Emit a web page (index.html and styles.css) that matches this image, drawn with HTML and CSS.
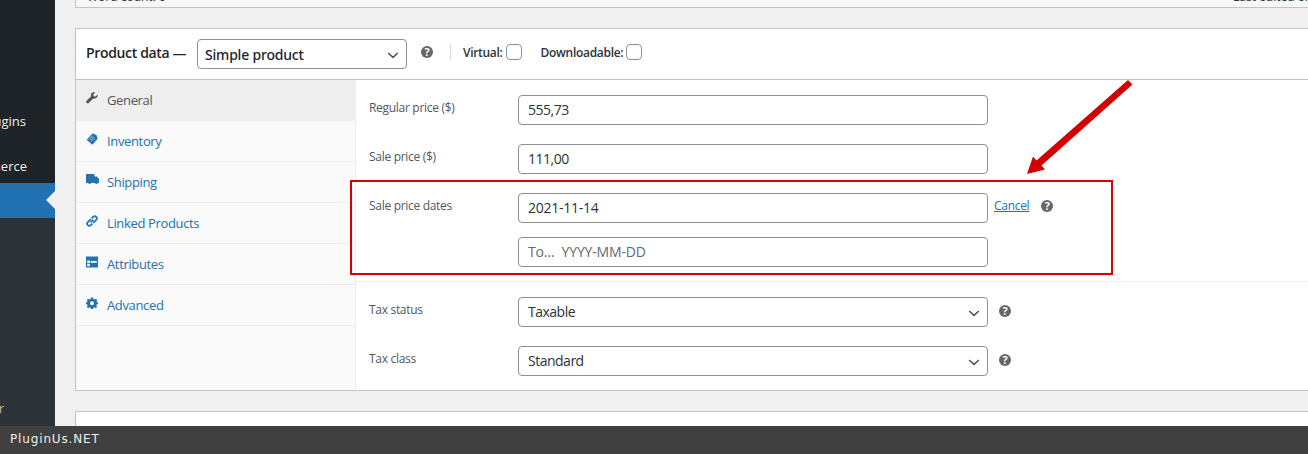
FILE: index.html
```html
<!DOCTYPE html>
<html lang="en">
<head>
<meta charset="utf-8">
<title>Product data</title>
<link rel="stylesheet" href="styles.css">
</head>
<body>
<div class="page">
  <aside class="sidebar">
    <div class="menu-dark">
      <div class="menu-item item-plugins">Plugins</div>
      <div class="menu-item item-woo">WooCommerce</div>
    </div>
    <div class="menu-active"><span class="menu-arrow"></span></div>
    <div class="menu-lower">
      <div class="menu-item item-last">Filter</div>
    </div>
  </aside>
  <main class="main">
    <div class="top-card">
      <span>Word count: 0</span>
      <span class="last-edited">Last edited on</span>
    </div>
    <section class="card product-card">
      <header class="card-head">
        <span class="head-title">Product data —</span>
        <select class="field head-select"><option>Simple product</option></select>
        <span class="help head-help">?</span>
        <span class="head-divider"></span>
        <label class="check-label">Virtual:<input class="check" type="checkbox"></label>
        <label class="check-label check-second">Downloadable:<input class="check" type="checkbox"></label>
      </header>
      <div class="card-body">
        <ul class="tabs">
          <li class="tab tab-active">
            <svg class="tab-icon" viewBox="0 0 12 12"><path d="M11.6 2.6 9.5 4.6 7.7 4.2 7.3 2.4 9.3.4C7.9-.1 6.5.2 5.700 1.100 4.900 2 4.700 3.200 5.100 4.300L.6 8.800C0 9.400 0 10.300.6 10.900 1.200 11.500 2.100 11.500 2.700 10.900L7.200 6.400C8.400 6.900 9.800 6.600 10.800 5.600 11.600 4.800 11.900 3.700 11.600 2.600Z"/></svg>
            General
          </li>
          <li class="tab">
            <svg class="tab-icon" viewBox="0 0 12 13"><path d="M6.800.2 11 2.400 12 6.600 6.400 12.800.2 7.200Z"/><path class="cut" d="M3.600 5 7.800 9.200M5.200 3.400 9.400 7.600M2.400 7.600 6.800 3M4.200 9.200 8.600 4.600"/></svg>
            Inventory
          </li>
          <li class="tab">
            <svg class="tab-icon icon-wide" viewBox="0 0 13 11"><path d="M0 0H8.400V2.400H10.800L13 5V9H11.700A1.400 1.400 0 0 1 9 9H5A1.400 1.400 0 0 1 2.300 9H0Z"/></svg>
            Shipping
          </li>
          <li class="tab">
            <svg class="tab-icon" viewBox="0 0 12 12"><path class="line" d="M4.600 7.400 7.400 4.600M4.800 4.200 1.800 7.200A2.100 2.100 0 0 0 4.800 10.200L6.400 8.600M7.200 7.800 10.200 4.800A2.100 2.100 0 0 0 7.200 1.800L5.600 3.400"/></svg>
            Linked Products
          </li>
          <li class="tab">
            <svg class="tab-icon" viewBox="0 0 12 11"><path fill-rule="evenodd" d="M0 0H12V11H0ZM1.200 4V6.800H3.800V4ZM1.200 7.400V9.800H3.800V7.400ZM4.600 4.600V6.200H10.800V4.600Z"/></svg>
            Attributes
          </li>
          <li class="tab">
            <svg class="tab-icon" viewBox="0 0 12 12"><path fill-rule="evenodd" d="M4.900.4H7.100L7.400 2 8.700 2.600 10 1.700 11.300 3.200 10.400 4.400 10.900 5.100 12 5.400V7.100L10.700 7.500 10.300 8.500 11.100 9.800 9.700 11.200 8.500 10.300 7.400 10.800 7.100 12H4.900L4.600 10.800 3.500 10.300 2.200 11.200.8 9.800 1.700 8.500 1.200 7.500 0 7.100V5.400L1.200 5.100 1.600 4.300.8 3.100 2.200 1.700 3.400 2.600 4.600 2ZM6 4.200A2 2 0 1 0 6 8.200 2 2 0 0 0 6 4.200Z"/></svg>
            Advanced
          </li>
        </ul>
        <div class="panel">
          <div class="group">
            <div class="row row-gap">
              <label class="row-label">Regular price ($)</label>
              <input class="field" type="text" value="555,73">
            </div>
            <div class="row row-gap">
              <label class="row-label">Sale price ($)</label>
              <input class="field" type="text" value="111,00">
            </div>
            <div class="row row-dates">
              <label class="row-label">Sale price dates</label>
              <input class="field field-date" type="text" value="2021-11-14">
              <a class="cancel" href="#">Cancel</a>
              <span class="help date-help">?</span>
            </div>
            <div class="row">
              <span class="row-label"></span>
              <input class="field" type="text" placeholder="To…  YYYY-MM-DD">
            </div>
          </div>
          <div class="group group-tax">
            <div class="row row-gap">
              <label class="row-label">Tax status</label>
              <select class="field"><option>Taxable</option></select>
              <span class="help tax-help">?</span>
            </div>
            <div class="row">
              <label class="row-label">Tax class</label>
              <select class="field"><option>Standard</option></select>
              <span class="help tax-help">?</span>
            </div>
          </div>
        </div>
      </div>
    </section>
    <section class="card next-card"></section>
  </main>
  <footer class="bar">PluginUs.NET</footer>
  <div class="red-box"></div>
  <svg class="red-arrow" viewBox="0 0 110 100"><path d="M102 0 106.500 4.500 15.500 85.500 19 89.500 1 94 7 76.500 10.500 80.500Z"/></svg>
</div>
</body>
</html>
```
FILE: styles.css
```css
* { box-sizing: border-box; }
html, body { margin: 0; padding: 0; height: 100%; overflow: hidden; }
body { font-family: "Open Sans", "Noto Sans", sans-serif; color: #2c3338; }

.page {
  position: relative;
  width: 1308px;
  height: 454px;
  display: grid;
  grid-template-columns: 55px 1fr;
  grid-template-rows: 426px 28px;
  overflow: hidden;
  background: #f0f0f1;
}

/* sidebar */
.sidebar { display: flex; flex-direction: column; overflow: hidden; }
.menu-dark { height: 183px; background: #1d2327; padding-top: 112px; }
.menu-active { position: relative; height: 35px; background: #2271b1; }
.menu-arrow {
  position: absolute;
  right: 0;
  top: 8px;
  border: 9px solid transparent;
  border-right-color: #f0f0f1;
  border-left-width: 0;
}
.menu-lower { flex: 1; background: #2c3338; padding-top: 181px; }
.menu-item {
  display: flex;
  justify-content: flex-end;
  height: 18px;
  line-height: 18px;
  font-size: 13px;
  color: #f0f0f1;
  white-space: nowrap;
}
.item-plugins { padding-right: 29px; }
.item-woo { margin-top: 27px; padding-right: 28px; }
.item-last { padding-right: 51px; color: #c9b896; }

/* main */
.main { padding-left: 20px; overflow: hidden; min-width: 0; }
.top-card {
  position: relative;
  height: 8px;
  margin-bottom: 20px;
  margin-right: -20px;
  background: #f6f7f7;
  border: 1px solid #c3c4c7;
  border-top: 0;
  font-size: 12px;
  line-height: 16px;
  color: #2c3338;
  overflow: hidden;
}
.top-card span { display: block; position: absolute; left: 11px; top: -11px; }
.top-card .last-edited { left: 1157px; white-space: nowrap; }

.card {
  background: #fff;
  border: 1px solid #c3c4c7;
  margin-right: -20px;
}
.product-card { height: 363px; margin-bottom: 20px; }
.next-card { height: 40px; }

.card-head {
  height: 51px;
  display: flex;
  align-items: center;
  padding-left: 10px;
  border-bottom: 1px solid #c3c4c7;
  padding-bottom: 4px;
}
.head-title { width: 111px; font-size: 14px; font-weight: 600; letter-spacing: -0.35px; color: #1d2327; white-space: nowrap; }
.head-select.field { width: 210px; padding: 1px 24px 0 7px; font-family: "Noto Sans", "Open Sans", sans-serif; font-weight: 500; letter-spacing: -0.2px; color: #1d2327; margin-top: 4px; }
.head-help { margin-left: 14px; }
.head-divider { width: 1px; height: 16px; margin-left: 17px; background: #dcdcde; }
.check-label { display: flex; align-items: center; font-size: 12px; font-weight: 600; letter-spacing: -0.3px; color: #2c3338; margin-left: 12px; white-space: nowrap; }
.check-second { margin-left: 19px; }
.check {
  appearance: none;
  -webkit-appearance: none;
  width: 16px;
  height: 16px;
  margin: 0 0 0 3px;
  background: #fff;
  border: 1px solid #8c8f94;
  border-radius: 4px;
}

.card-body { display: flex; height: 310px; }

/* tabs */
.tabs {
  width: 280px;
  flex: none;
  margin: 0;
  padding: 0;
  list-style: none;
  background: #fafafa;
  border-right: 1px solid #eee;
}
.tab {
  display: flex;
  align-items: center;
  gap: 9px;
  height: 41px;
  padding: 0 0 1px 10px;
  font-size: 13px;
  letter-spacing: -0.35px;
  color: #2271b1;
  border-bottom: 1px solid #eee;
}
.tab-active { background: #eee; color: #555; }
.tab-icon { width: 12px; height: 12px; fill: #2271b1; flex: none; margin-top: -4px; }
.tab-active .tab-icon { fill: #555; }
.icon-wide { width: 13px; height: 11px; margin-right: -1px; }
.tab-icon .cut { fill: none; stroke: #a9cbe6; stroke-width: 0.7; }
.tab-icon .line { fill: none; stroke: #2271b1; stroke-width: 1.7; }

/* panel */
.panel { flex: 1; min-width: 0; }
.group { padding: 15px 0 14px 13px; border-bottom: 1px solid #eee; }
.group-tax { border-bottom: 0; }
.row { display: flex; align-items: flex-start; }
.row-gap { margin-bottom: 19px; }
.row-dates { margin-bottom: 14px; }
.row-label { width: 149px; flex: none; font-size: 12px; letter-spacing: -0.3px; line-height: 16px; padding-top: 5px; color: #50575e; }

.field {
  display: block;
  width: 470px;
  height: 30px;
  margin: 0;
  padding: 0 9px 2px;
  font: 14px/26px "Open Sans", "Noto Sans", sans-serif;
  letter-spacing: -0.5px;
  color: #2c3338;
  background: #fff;
  border: 1px solid #8c8f94;
  border-radius: 4px;
  outline: 0;
}
.field-date { letter-spacing: -0.25px; }
.field::placeholder { color: #646970; opacity: 1; letter-spacing: -0.15px; }
select.field {
  appearance: none;
  -webkit-appearance: none;
  padding: 0 24px 0 9px;
  background: #fff url("data:image/svg+xml,%3Csvg xmlns='http://www.w3.org/2000/svg' viewBox='0 0 20 20'%3E%3Cpath d='M4 7.500l6 5.500 6-5.500' fill='none' stroke='%23555' stroke-width='1.900'/%3E%3C/svg%3E") no-repeat right 5px top 7px / 16px 16px;
}

.help {
  display: inline-block;
  flex: none;
  width: 12px;
  height: 12px;
  border-radius: 50%;
  background: #666;
  color: #fff;
  font-size: 11px;
  font-weight: 700;
  line-height: 12px;
  text-align: center;
}
.cancel { margin: 4px 0 0 6px; font-size: 12px; letter-spacing: -0.3px; line-height: 18px; color: #2271b1; }
.date-help { margin: 7px 0 0 12px; }
.tax-help { margin: 8px 0 0 11px; }

/* footer */
.bar {
  grid-column: 1 / -1;
  background: #404040;
  color: #eee;
  font-family: "DejaVu Sans", sans-serif;
  font-size: 12px;
  line-height: 27px;
  padding-left: 10px;
  letter-spacing: 0.85px;
}

/* annotations */
.red-box {
  position: absolute;
  left: 350px;
  top: 180px;
  width: 763px;
  height: 95px;
  border: 2px solid #d40000;
}
.red-arrow {
  position: absolute;
  left: 1026px;
  top: 80px;
  width: 110px;
  height: 100px;
  fill: #d40000;
}
```
